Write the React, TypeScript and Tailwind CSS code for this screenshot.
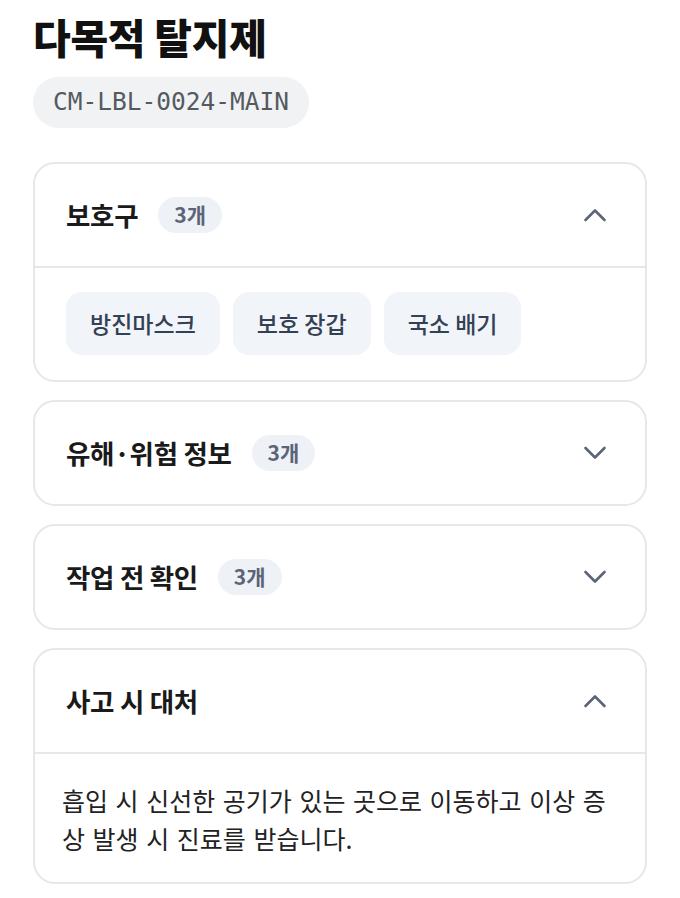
import { useState } from "react";

type Section = {
  id: string;
  title: string;
  count?: number;
  chips?: string[];
  text?: string;
  open: boolean;
};

const SECTIONS: Section[] = [
  { id: "ppe", title: "보호구", count: 3, chips: ["방진마스크", "보호 장갑", "국소 배기"], open: true },
  { id: "hazard", title: "유해·위험 정보", count: 3, open: false },
  { id: "check", title: "작업 전 확인", count: 3, open: false },
  {
    id: "accident",
    title: "사고 시 대처",
    text: "흡입 시 신선한 공기가 있는 곳으로 이동하고 이상 증상 발생 시 진료를 받습니다.",
    open: true,
  },
];

function Chevron({ up }: { up: boolean }) {
  return (
    <svg width="24" height="14" viewBox="0 0 24 14" fill="none" className="shrink-0">
      <path
        d={up ? "M2.5 12 L12 2.5 L21.5 12" : "M2.5 2 L12 11.5 L21.5 2"}
        stroke="#5b6478"
        strokeWidth="2.6"
        strokeLinecap="round"
        strokeLinejoin="round"
      />
    </svg>
  );
}

function Card({ section }: { section: Section }) {
  const [open, setOpen] = useState(section.open);
  return (
    <div className="rounded-[22px] border-2 border-[#e6e7ea] bg-white overflow-hidden">
      <button
        onClick={() => setOpen(!open)}
        className="flex h-[102px] w-full items-center justify-between pl-[31px] pr-[38px] text-left"
      >
        <div className="flex items-center gap-[20px]">
          <span className="text-[26.5px] font-bold leading-none tracking-[-0.3px] text-[#1a1a1a]">
            {section.title}
          </span>
          {section.count !== undefined && (
            <span className="flex h-[36px] items-center rounded-full bg-[#eef2f6] px-[16px] text-[21px] font-bold text-[#5b6478]">
              {section.count}개
            </span>
          )}
        </div>
        <Chevron up={open} />
      </button>
      {open && (
        <div className="border-t-2 border-[#e6e7ea]">
          {section.chips && (
            <div className="flex flex-wrap gap-[13px] px-[31px] pt-[24px] pb-[25px]">
              {section.chips.map((c) => (
                <span
                  key={c}
                  className="flex h-[63px] items-center rounded-[16px] bg-[#f1f4f8] px-[24px] text-[23px] font-medium text-[#334155]"
                >
                  {c}
                </span>
              ))}
            </div>
          )}
          {section.text && (
            <p className="px-[27px] pt-[27px] pb-[25px] text-[25px] leading-[38px] text-[#222222] [word-spacing:2px]">
              {section.text}
            </p>
          )}
        </div>
      )}
    </div>
  );
}

export default function App() {
  return (
    <div
      className="min-h-screen bg-white px-[33px] pt-[12px] pb-[14px]"
      style={{ fontFamily: '"Noto Sans CJK KR", "Noto Sans", sans-serif' }}
    >
      <h1 className="text-[41px] font-black leading-[48px] tracking-[-0.3px] text-[#111111]">다목적 탈지제</h1>
      <div className="mt-[17px] flex">
        <span
          className="flex h-[51px] items-center rounded-full bg-[#f1f2f4] px-[20px] text-[24.5px] text-[#555a60]"
          style={{ fontFamily: '"DejaVu Sans Mono", "Liberation Mono", monospace' }}
        >
          CM-LBL-0024-MAIN
        </span>
      </div>
      <div className="mt-[34px] flex flex-col gap-[18px]">
        {SECTIONS.map((s) => (
          <Card key={s.id} section={s} />
        ))}
      </div>
    </div>
  );
}
